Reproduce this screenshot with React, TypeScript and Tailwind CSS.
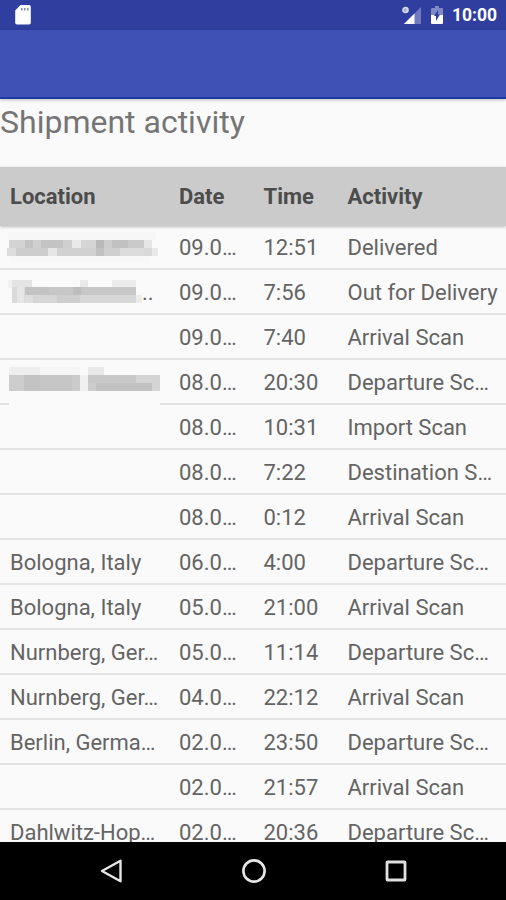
import { clsx } from "clsx";

/* ------------------------------------------------------------------ */
/*  Types                                                              */
/* ------------------------------------------------------------------ */
interface Scan {
  location?: string;
  mask?: keyof typeof MASKS;
  date: string;
  time: string;
  activity: string;
}

type Cell = [x: number, y: number, w: number, h: number, fill: string];

/* ------------------------------------------------------------------ */
/*  Data                                                               */
/* ------------------------------------------------------------------ */

// Pixelated blocks that hide a location, relative to the top left of the row
const MASKS: Record<string, Cell[]> = {
  first: [
    [8, 6, 148, 8, "#f7f7f7"],
    [9, 30, 140, 7, "#f8f8f8"],
    [9, 14, 16, 8, "#d3d3d3"],
    [25, 14, 8, 8, "#c3c3c3"],
    [33, 14, 8, 8, "#cfcfcf"],
    [41, 14, 22, 8, "#c3c3c3"],
    [63, 14, 9, 8, "#cfcfcf"],
    [72, 14, 9, 8, "#e9e9e9"],
    [81, 14, 15, 8, "#d5d5d5"],
    [96, 14, 8, 8, "#b9b9b9"],
    [104, 14, 8, 8, "#cdcdcd"],
    [112, 14, 16, 8, "#c1c1c1"],
    [128, 14, 16, 8, "#cacaca"],
    [144, 14, 8, 8, "#e6e6e6"],
    [7, 22, 9, 8, "#dddddd"],
    [16, 22, 32, 8, "#cdcdcd"],
    [48, 22, 9, 8, "#e6e6e6"],
    [57, 22, 39, 8, "#d1d1d1"],
    [96, 22, 8, 8, "#c1c1c1"],
    [104, 22, 16, 8, "#cfcfcf"],
    [120, 22, 24, 8, "#dcdcdc"],
    [144, 22, 8, 8, "#d9d9d9"],
    [152, 22, 6, 8, "#e9e9e9"],
  ],
  second: [
    [8, 10, 4, 8, "#f1f1f1"],
    [12, 10, 20, 8, "#e4e4e4"],
    [80, 10, 8, 8, "#eaeaea"],
    [112, 10, 24, 8, "#ebebeb"],
    [12, 17, 13, 16, "#dadada"],
    [17, 17, 7, 16, "#e6e6e6"],
    [25, 17, 24, 8, "#c3c3c3"],
    [49, 17, 24, 8, "#c7c7c7"],
    [73, 17, 8, 8, "#bebebe"],
    [81, 17, 55, 8, "#c7c7c7"],
    [25, 25, 8, 8, "#dedede"],
    [33, 25, 24, 8, "#d6d6d6"],
    [57, 25, 23, 8, "#cecece"],
    [80, 25, 56, 8, "#d7d7d7"],
    [136, 25, 6, 8, "#ececec"],
  ],
  third: [
    [9, 32, 151, 16, "#fafafa"],
    [9, 7, 31, 8, "#eeeeee"],
    [40, 7, 40, 8, "#f6f6f6"],
    [88, 7, 16, 8, "#e9e9e9"],
    [9, 15, 15, 16, "#cdcdcd"],
    [24, 15, 16, 16, "#c3c3c3"],
    [40, 15, 32, 16, "#c6c6c6"],
    [72, 15, 8, 16, "#cbcbcb"],
    [80, 15, 8, 16, "#f0f0f0"],
    [88, 15, 48, 8, "#c9c9c9"],
    [136, 15, 24, 8, "#d4d4d4"],
    [88, 23, 8, 8, "#cccccc"],
    [96, 23, 56, 8, "#c2c2c2"],
    [152, 23, 8, 8, "#d5d5d5"],
  ],
};

const SCANS: Scan[] = [
  { mask: "first", date: "09.0…", time: "12:51", activity: "Delivered" },
  { mask: "second", location: "..", date: "09.0…", time: "7:56", activity: "Out for Delivery" },
  { date: "09.0…", time: "7:40", activity: "Arrival Scan" },
  { mask: "third", date: "08.0…", time: "20:30", activity: "Departure Sc…" },
  { date: "08.0…", time: "10:31", activity: "Import Scan" },
  { date: "08.0…", time: "7:22", activity: "Destination S…" },
  { date: "08.0…", time: "0:12", activity: "Arrival Scan" },
  { location: "Bologna, Italy", date: "06.0…", time: "4:00", activity: "Departure Sc…" },
  { location: "Bologna, Italy", date: "05.0…", time: "21:00", activity: "Arrival Scan" },
  { location: "Nurnberg, Ger…", date: "05.0…", time: "11:14", activity: "Departure Sc…" },
  { location: "Nurnberg, Ger…", date: "04.0…", time: "22:12", activity: "Arrival Scan" },
  { location: "Berlin, Germa…", date: "02.0…", time: "23:50", activity: "Departure Sc…" },
  { date: "02.0…", time: "21:57", activity: "Arrival Scan" },
  { location: "Dahlwitz-Hop…", date: "02.0…", time: "20:36", activity: "Departure Sc…" },
];

const COLUMNS = "grid grid-cols-[169px_84.500px_84px_1fr] pl-2.5 whitespace-nowrap";

/* ------------------------------------------------------------------ */
/*  Status bar                                                         */
/* ------------------------------------------------------------------ */
function StatusBar() {
  return (
    <div className="flex h-[30px] shrink-0 items-center bg-[#303f9f] pl-[15px] pr-[9px]">
      <svg width="17" height="20" viewBox="0 0 17 20">
        <path d="M5.500 0H14a1.800 1.800 0 0 1 1.800 1.800v16A1.800 1.800 0 0 1 14 19.600H2A1.800 1.800 0 0 1 .2 17.800V5.500z" fill="#fff" />
        <path d="M6 3h1.600v2.500H6zM9 3h1.600v2.500H9zM12 3h1.600v2.500H12z" fill="#303f9f" fillOpacity=".6" />
      </svg>
      <svg className="ml-auto" width="20" height="19" viewBox="0 0 20 19">
        <path d="M19 1v17H2z" fill="#6f7abf" />
        <path d="M12.500 7.500V18H2z" fill="#fff" />
        <circle cx="3.500" cy="4" r="2.400" fill="#8f98cd" stroke="#d5d9ee" strokeWidth="1.800" />
        <path d="M3.500 4.200h2.800" stroke="#d5d9ee" strokeWidth="1.400" />
      </svg>
      <svg className="ml-[9px]" width="12" height="18" viewBox="0 0 12 18">
        <path d="M4 0h4v2h3a1 1 0 0 1 1 1v7H0V3a1 1 0 0 1 1-1h3z" fill="#7f89c6" />
        <path d="M0 9h12v8a1 1 0 0 1-1 1H1a1 1 0 0 1-1-1z" fill="#fff" />
        <path d="M7 4v4.500h2L5 15v-5H3z" fill="#303f9f" />
      </svg>
      <span className="ml-[9px] pt-0.5 text-[17.500px] leading-none font-bold text-white">10:00</span>
    </div>
  );
}

/* ------------------------------------------------------------------ */
/*  Table                                                              */
/* ------------------------------------------------------------------ */
function LocationMask({ cells }: { cells: Cell[] }) {
  return (
    <svg className="absolute top-0 left-0 blur-[0.7px]" width="170" height="50">
      {cells.map(([x, y, w, h, fill], i) => (
        <rect key={i} x={x} y={y} width={w} height={h} fill={fill} />
      ))}
    </svg>
  );
}

function ScanRow({ scan, first }: { scan: Scan; first: boolean }) {
  return (
    <div
      className={clsx(
        COLUMNS,
        "relative shrink-0 items-center border-b-2 border-[#e3e3e3] text-[22px] text-[#646464]",
        first ? "h-[44px]" : "h-[45px] pt-px"
      )}
    >
      {scan.mask && <LocationMask cells={MASKS[scan.mask]} />}
      <span className={clsx(scan.mask && "pl-[132px]")}>{scan.location}</span>
      <span>{scan.date}</span>
      <span>{scan.time}</span>
      <span>{scan.activity}</span>
    </div>
  );
}

/* ------------------------------------------------------------------ */
/*  Navigation bar                                                     */
/* ------------------------------------------------------------------ */
function NavBar() {
  return (
    <div className="flex h-[58px] shrink-0 items-center justify-between bg-black pr-[97px] pl-[98px]">
      <svg width="26" height="26" viewBox="0 0 26 26" fill="none" stroke="#e6e6e6" strokeWidth="2.400">
        <path d="M22.500 2.700v20.600L4 13z" strokeLinejoin="round" />
      </svg>
      <svg width="26" height="26" viewBox="0 0 26 26" fill="none" stroke="#e6e6e6" strokeWidth="2.600">
        <circle cx="13" cy="13" r="10.600" />
      </svg>
      <svg width="26" height="26" viewBox="0 0 26 26" fill="none" stroke="#e0e0e0" strokeWidth="2.800">
        <rect x="4" y="4" width="18" height="18" rx=".5" />
      </svg>
    </div>
  );
}

export default function App() {
  return (
    <div className="flex h-[900px] w-[506px] flex-col overflow-hidden bg-[#fafafa] font-['Roboto',sans-serif]">
      <StatusBar />
      <div className="z-10 h-[69px] shrink-0 border-b-2 border-[#1c3aa3] bg-[#3f51b5] shadow-[0_1px_3px_rgba(0,0,0,0.25)]" />

      <main className="flex min-h-0 flex-1 flex-col overflow-hidden">
        <h1 className="h-[68px] shrink-0 pt-[3px] text-[32px] leading-[40px] text-[#757575]">
          Shipment activity
        </h1>
        <div
          className={clsx(
            COLUMNS,
            "z-10 h-[59px] shrink-0 items-center bg-[#cbcbcb] text-[22px] font-bold text-[#4c4c4c] shadow-[0_1px_3px_rgba(0,0,0,0.25)]"
          )}
        >
          <span>Location</span>
          <span>Date</span>
          <span>Time</span>
          <span>Activity</span>
        </div>
        {SCANS.map((scan, i) => (
          <ScanRow key={i} scan={scan} first={i === 0} />
        ))}
      </main>

      <NavBar />
    </div>
  );
}
